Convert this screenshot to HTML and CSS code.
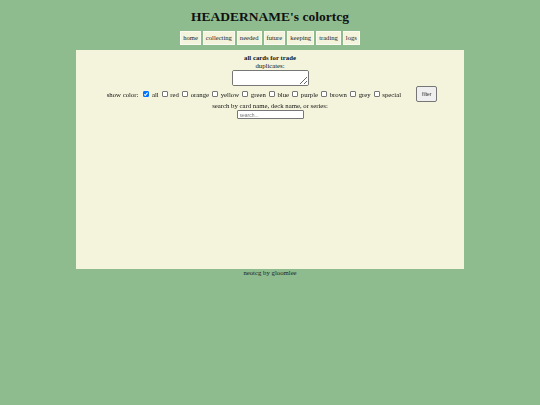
FILE: index.html
```html
<!DOCTYPE html>
<html>
<head>
<meta charset="utf-8">
<link rel="stylesheet" href="styles.css">
</head>
<body>
<h1 class="title">HEADERNAME's colortcg</h1>
<nav class="nav">
  <a class="nav-item" href="#">home</a>
  <a class="nav-item" href="#">collecting</a>
  <a class="nav-item" href="#">needed</a>
  <a class="nav-item" href="#">future</a>
  <a class="nav-item" href="#">keeping</a>
  <a class="nav-item" href="#">trading</a>
  <a class="nav-item" href="#">logs</a>
</nav>
<main class="panel">
  <div class="heading">all cards for trade</div>
  <div class="label">duplicates:</div>
  <textarea class="dupes"></textarea>
  <form class="filter-row">
    <span class="show">show color:</span>
    <label class="opt"><input class="cb" type="checkbox" checked>all</label>
    <label class="opt"><input class="cb" type="checkbox">red</label>
    <label class="opt"><input class="cb" type="checkbox">orange</label>
    <label class="opt"><input class="cb" type="checkbox">yellow</label>
    <label class="opt"><input class="cb" type="checkbox">green</label>
    <label class="opt"><input class="cb" type="checkbox">blue</label>
    <label class="opt"><input class="cb" type="checkbox">purple</label>
    <label class="opt"><input class="cb" type="checkbox">brown</label>
    <label class="opt"><input class="cb" type="checkbox">grey</label>
    <label class="opt"><input class="cb" type="checkbox">special</label>
    <button class="filter-btn" type="button">filter</button>
  </form>
  <div class="label">search by card name, deck name, or series:</div>
  <input class="search" type="text" placeholder="search...">
</main>
<footer class="footer"><a href="#">neotcg</a> by <a href="#">gloomlee</a></footer>
</body>
</html>
```
FILE: styles.css
```css
html, body {
  margin: 0;
  padding: 0;
}
body {
  background: #8fbc8f;
  font-family: "Liberation Serif", "Times New Roman", serif;
  color: #111;
  font-size: 6.75px;
}
.title {
  margin: 0;
  padding-top: 9px;
  height: 21px;
  text-align: center;
  font-size: 13.5px;
  line-height: 16px;
  font-weight: bold;
  color: #111;
}
.nav {
  display: flex;
  justify-content: center;
  gap: 2px;
  height: 20px;
  align-items: flex-start;
  padding-top: 1px;
  box-sizing: border-box;
}
.nav-item {
  display: block;
  background: #f4f4dc;
  border: 1px solid #fafaf0;
  padding: 0 2px;
  height: 12px;
  line-height: 12px;
  font-size: 6.6px;
  color: #222;
  text-decoration: none;
}
.panel {
  width: 388px;
  height: 219px;
  margin: 0 auto;
  background: #f4f4dc;
  box-sizing: border-box;
  padding-top: 4px;
  display: flex;
  flex-direction: column;
  align-items: center;
}
.heading {
  font-weight: bold;
  line-height: 8px;
}
.label {
  line-height: 8px;
}
.dupes {
  width: 77px;
  height: 16px;
  box-sizing: border-box;
  margin: 0;
  padding: 0;
  border: 1px solid #767676;
  border-radius: 2px;
  background: #fff;
  resize: both;
  display: block;
}
.filter-row {
  margin: 0 0 0 4px;
  display: flex;
  align-items: center;
  height: 16px;
}
.show {
  margin-right: 5px;
}
.opt {
  display: flex;
  align-items: center;
  gap: 2.5px;
  margin-right: 3.2px;
}
.cb {
  appearance: none;
  -webkit-appearance: none;
  width: 6px;
  height: 6px;
  margin: 0;
  box-sizing: border-box;
  border: 1px solid #767676;
  border-radius: 1px;
  background: #fff;
  position: relative;
}
.cb:checked {
  background: #0075ff;
  border-color: #0075ff;
}
.cb:checked::after {
  content: "";
  position: absolute;
  left: 1px;
  top: 0;
  width: 1.2px;
  height: 2.6px;
  border: solid #fff;
  border-width: 0 1px 1px 0;
  transform: rotate(40deg);
}
.filter-btn {
  margin-left: 12px;
  width: 21px;
  height: 16px;
  padding: 0;
  font-size: 5px;
  font-family: "Liberation Sans", Arial, sans-serif;
  border: 1px solid #767676;
  border-radius: 2px;
  background: #efefef;
  color: #333;
}
.search {
  width: 67px;
  height: 9px;
  box-sizing: border-box;
  margin: 0;
  padding: 0 2px;
  border: 1px solid #767676;
  border-radius: 1px;
  font-size: 5px;
  font-family: "Liberation Sans", Arial, sans-serif;
}
.footer {
  text-align: center;
  padding-top: 1px;
  line-height: 6px;
  color: #222;
}
.footer a {
  color: #222;
}
```
